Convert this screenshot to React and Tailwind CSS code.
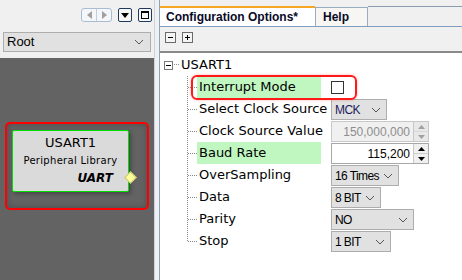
import React from "react";

const Chevron = ({ className = "" }) => (
  <svg width="10" height="6" viewBox="0 0 10 6" className={className}>
    <polyline points="1,1 5,5 9,1" fill="none" stroke="#555" strokeWidth="1" />
  </svg>
);

const Select = ({ w, text, color = "#000" }) => (
  <div
    className="h-[21px] mt-px flex items-center justify-between border border-[#adadad] bg-[#e1e1e1] pl-[3px] pr-[5px] text-[12px] tracking-[-0.6px]"
    style={{ width: w, color, fontFamily: '"Liberation Sans", Arial, sans-serif' }}
  >
    <span>{text}</span>
    <Chevron />
  </div>
);

const Spinner = ({ text, disabled }) => (
  <div
    className={`h-[21px] mt-px w-[98px] flex border ${disabled ? "border-[#c8c8c8] bg-[#f0f0f0] text-[#8d8d8d]" : "border-[#a8a8a8] bg-white text-black"}`}
    style={{ fontFamily: '"Liberation Sans", Arial, sans-serif' }}
  >
    <div className="flex-1 flex items-center justify-end pr-[3px] text-[12px]">{text}</div>
    <div className="w-[15px] flex flex-col border-l border-[#c8c8c8]">
      <div className={`flex-1 flex items-center justify-center border-b ${disabled ? "border-[#d8d8d8] bg-[#e8e8e8]" : "border-[#d0d0d0] bg-[#f0f0f0]"}`}>
        <svg width="7" height="4" viewBox="0 0 7 4"><polygon points="0,4 3.5,0 7,4" fill={disabled ? "#a0a0a0" : "#000"} /></svg>
      </div>
      <div className={`flex-1 flex items-center justify-center ${disabled ? "bg-[#e8e8e8]" : "bg-[#f0f0f0]"}`}>
        <svg width="7" height="4" viewBox="0 0 7 4"><polygon points="0,0 3.5,4 7,0" fill={disabled ? "#a0a0a0" : "#000"} /></svg>
      </div>
    </div>
  </div>
);

const Connector = ({ last }) => (
  <svg width="10" height="22" viewBox="0 0 10 22" className="shrink-0">
    <line x1="0.5" y1="0" x2="0.5" y2={last ? 11 : 22} stroke="#8a8a8a" strokeDasharray="1,1" />
    <line x1="1" y1="11.5" x2="10" y2="11.5" stroke="#8a8a8a" strokeDasharray="1,1" />
  </svg>
);

const rows = [
  { label: "Interrupt Mode", green: true, ctrl: <div className="mt-[5px] w-[13px] h-[13px] border border-[#333] bg-white" /> },
  { label: "Select Clock Source", ctrl: <Select w={56} text="MCK" color="#1c1c5c" /> },
  { label: "Clock Source Value", ctrl: <Spinner text="150,000,000" disabled /> },
  { label: "Baud Rate", green: true, ctrl: <Spinner text="115,200" /> },
  { label: "OverSampling", ctrl: <Select w={68} text="16 Times" /> },
  { label: "Data", ctrl: <Select w={50} text="8 BIT" /> },
  { label: "Parity", ctrl: <Select w={83} text="NO" /> },
  { label: "Stop", ctrl: <Select w={60} text="1 BIT" /> },
];

export default function App() {
  return (
    <div
      className="w-[462px] h-[280px] flex bg-[#f0f0f0] overflow-hidden"
      style={{ fontFamily: '"DejaVu Sans", Verdana, sans-serif' }}
    >
      {/* Left panel */}
      <div className="w-[155px] h-full flex flex-col border-r border-[#c8d4e0]">
        <div className="h-[32px] flex items-start pt-[8px] pl-[81px] gap-0">
          <div className="w-[31px] h-[14px] flex rounded-[3px] border border-[#a9bcd4] bg-[#f4f6f9]">
            <div className="flex-1 flex items-center justify-center border-r border-[#c0cede]">
              <svg width="5" height="8" viewBox="0 0 5 8"><polygon points="5,0 0,4 5,8" fill="#a0a0a0" /></svg>
            </div>
            <div className="flex-1 flex items-center justify-center">
              <svg width="5" height="8" viewBox="0 0 5 8"><polygon points="0,0 5,4 0,8" fill="#a0a0a0" /></svg>
            </div>
          </div>
          <div className="ml-[6px] w-[14px] h-[14px] flex items-center justify-center rounded-[2px] border border-[#1f3a5c] bg-[#f6f6f6]">
            <svg width="8" height="5" viewBox="0 0 8 5"><polygon points="0,0 8,0 4,5" fill="#000" /></svg>
          </div>
          <div className="ml-[6px] w-[14px] h-[14px] flex items-center justify-center rounded-[2px] border border-[#1f3a5c] bg-[#f6f6f6]">
            <div className="w-[8px] h-[8px] border border-[#000] border-t-2" />
          </div>
        </div>
        <div className="px-[3px]">
          <div
            className="h-[20px] flex items-center justify-between border border-[#adadad] bg-[#e1e1e1] pl-[3px] pr-[6px] text-[13px] text-black"
            style={{ fontFamily: '"Liberation Sans", Arial, sans-serif' }}
          >
            <span>Root</span>
            <Chevron />
          </div>
        </div>
        <div className="mt-[6px] flex-1 bg-[#636363] pt-[64px] pl-[5px]">
          <div className="relative w-[144px] h-[88px] rounded-[5px] border-2 border-[#ff0000] pt-[6px] pl-[5px] shadow-[inset_0_0_6px_rgba(0,0,0,0.25)]">
            <div className="relative w-[117px] h-[62px] rounded-[2px] border border-[#00e000] bg-[#dadada] flex flex-col items-center shadow-[2px_2px_4px_rgba(0,0,0,0.3)]">
              <div className="mt-[3px] text-[13px] leading-[18px] text-black">USART1</div>
              <div className="mt-[1px] text-[10px] leading-[16px] text-black tracking-[0.3px]">Peripheral Library</div>
              <div className="self-end mr-[15px] text-[12px] leading-[18px] font-bold italic text-black" style={{ fontFamily: '"DejaVu Sans", sans-serif' }}>UART</div>
              <div className="absolute right-[-7px] top-[42px] w-[9px] h-[9px] rotate-45 bg-[#ffff9c] border border-[#c8c070]" />
            </div>
          </div>
        </div>
      </div>

      {/* Right panel */}
      <div className="ml-[4px] flex-1 h-full flex flex-col border-l border-[#8ea2b8]">
        <div className="h-[27px] flex items-end border-b border-[#7f9dbd]">
          <div
            className="w-[155px] h-[20px] bg-white border-t-2 border-[#f5a623] flex items-center pl-[6px] text-[12px] font-bold text-[#0a0a28]"
            style={{ fontFamily: '"Liberation Sans", Arial, sans-serif' }}
          >
            Configuration Options*
          </div>
          <div
            className="w-[53px] h-[19px] bg-[#f7f6f2] border border-b-0 border-[#9aacbf] flex items-center pl-[7px] text-[12px] font-bold text-[#0a0a28]"
            style={{ fontFamily: '"Liberation Sans", Arial, sans-serif' }}
          >
            Help
          </div>
          <div className="flex-1 h-[20px] border-t border-[#8c9cb0]" />
        </div>
        <div className="h-[26px] flex items-start pt-[5px] pl-[5px] gap-[6px] border-b-2 border-[#8a8a8a]">
          <div className="w-[11px] h-[11px] border border-[#6a6a6a] bg-[#f4f4f4] flex items-center justify-center">
            <div className="w-[5px] h-[1px] bg-black" />
          </div>
          <div className="w-[11px] h-[11px] border border-[#6a6a6a] bg-[#f4f4f4] flex items-center justify-center relative">
            <div className="w-[5px] h-[1px] bg-black" />
            <div className="absolute w-[1px] h-[5px] bg-black" />
          </div>
        </div>
        <div className="flex-1 bg-white pt-[1px] relative text-[13px] text-black">
          <div className="h-[22px] flex items-center pl-[4px]">
            <div className="w-[9px] h-[9px] border border-[#7a7a7a] bg-white flex items-center justify-center">
              <div className="w-[5px] h-[1px] bg-black" />
            </div>
            <svg width="6" height="2" className="ml-[1px]"><line x1="0" y1="0.5" x2="6" y2="0.5" stroke="#8a8a8a" strokeDasharray="1,1" /></svg>
            <span className="ml-[1px]">USART1</span>
          </div>
          {rows.map((r, i) => (
            <div key={r.label} className="h-[22px] flex pl-[27px]">
              <Connector last={i === rows.length - 1} />
              <div className={`w-[124px] h-[22px] flex items-center pl-[2px] whitespace-nowrap ${r.green ? "bg-[#c0f7c0]" : ""}`}>
                {r.label}
              </div>
              <div className="ml-[10px]">{r.ctrl}</div>
            </div>
          ))}
          <div className="absolute left-[31px] top-[22px] w-[166px] h-[25px] rounded-[6px] border-2 border-[#ff1a1a] shadow-[0_0_3px_rgba(255,0,0,0.3)]" />
        </div>
      </div>
    </div>
  );
}
